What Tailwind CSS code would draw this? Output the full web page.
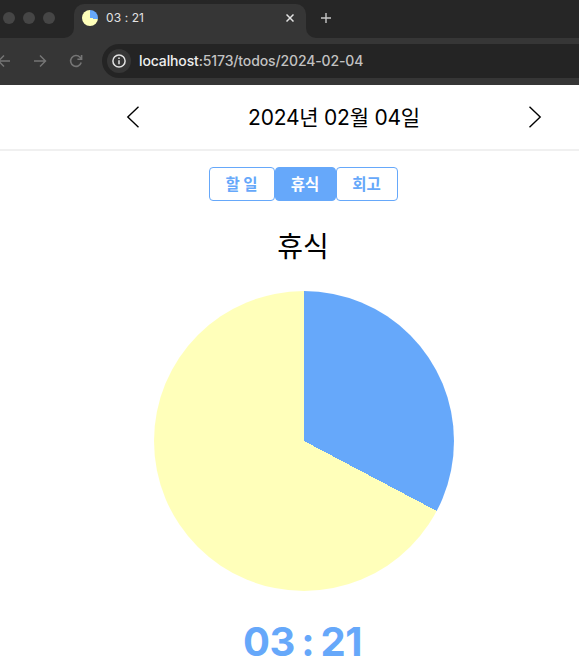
<!DOCTYPE html>
<html lang="ko">
<head>
  <meta charset="UTF-8" />
  <meta name="viewport" content="width=device-width, initial-scale=1.0" />
  <title>03 : 21</title>
  <script src="https://cdn.jsdelivr.net/npm/@tailwindcss/browser@4"></script>
</head>
<body class="h-screen overflow-hidden bg-white font-[Inter,'Noto_Sans_CJK_KR',sans-serif] text-black">

  <!-- Browser window -->
  <div class="h-[85px] bg-[#363636]">
    <!-- Tab strip -->
    <div class="flex h-[38px]">
      <div class="flex w-[74px] items-start gap-2 rounded-br-[10px] bg-[#262626] pt-3 pl-[3px]">
        <span class="size-3 rounded-full bg-[#464646]"></span>
        <span class="size-3 rounded-full bg-[#464646]"></span>
        <span class="size-3 rounded-full bg-[#464646]"></span>
      </div>
      <div class="w-[232px] bg-linear-to-b from-[#262626] from-50% to-[#363636] to-50% pt-1">
        <div class="flex h-[34px] items-start rounded-t-[10px] bg-[#363636] pt-1.5 pl-2">
          <span class="size-4 rounded-full bg-[conic-gradient(#66a8fa_100deg,#ffffba_100deg)]"></span>
          <span class="ml-2 text-xs leading-4 tracking-[0.1px] whitespace-pre text-[#e3e3e3]">03 : 21</span>
          <svg class="mt-1 mr-3 ml-auto size-2" viewBox="0 0 8 8" fill="none" stroke="#e3e3e3" stroke-width="1.5">
            <path d="M0.5 0.5 7.5 7.5M7.5 0.5 0.5 7.5" />
          </svg>
        </div>
      </div>
      <div class="flex-1 rounded-bl-[10px] bg-[#262626] pt-[13px] pl-[15px]">
        <svg class="size-[10px]" viewBox="0 0 10 10" fill="none" stroke="#c7c7c7" stroke-width="1.4">
          <path d="M5 0V10M0 5H10" />
        </svg>
      </div>
    </div>

    <!-- Toolbar -->
    <div class="flex h-[47px] items-center overflow-hidden pb-[1px]">
      <svg class="h-[14px] w-[11px] shrink-0" viewBox="3 0 11 14" fill="none" stroke="#757575" stroke-width="1.5">
        <path d="M13 7H2M7 1.5 1.5 7 7 12.5" />
      </svg>
      <svg class="ml-[22px] size-[14px] shrink-0" viewBox="0 0 14 14" fill="none" stroke="#757575" stroke-width="1.5">
        <path d="M1 7H12M7 1.5 12.5 7 7 12.5" />
      </svg>
      <svg class="ml-[22px] size-[14px] shrink-0" viewBox="0 0 14 14" fill="none" stroke="#757575" stroke-width="1.6">
        <path d="M12.2 8.5A5.4 5.4 0 1 1 11 3.3L12.7 5M12.6 1V5.2H8.4" />
      </svg>
      <div class="ml-[19px] flex h-[34px] flex-1 items-center rounded-l-full bg-[#242424] pl-[5px]">
        <span class="flex size-6 items-center justify-center rounded-full bg-[#363636]">
          <svg class="size-[14px]" viewBox="0 0 14 14" fill="none" stroke="#e3e3e3" stroke-width="1.5">
            <circle cx="7" cy="7" r="6.1" />
            <path d="M7 6.2V10.2M7 3.6V5.1" />
          </svg>
        </span>
        <p class="ml-2 text-[14px] leading-5 font-medium tracking-[-0.13px] whitespace-nowrap text-[#c2c2c2]"><span class="text-[#eeeeee]">localhost</span>:5173/todos/2024-02-04</p>
      </div>
    </div>
  </div>

  <!-- Date header -->
  <header class="flex h-[66px] items-center justify-between border-b-2 border-[#f0f0f0] pr-[37px] pl-[126px]">
    <svg class="h-[22px] w-[14px]" viewBox="0 0 14 22" fill="none" stroke="#000000" stroke-width="1.4">
      <path d="M12.5 0.8 1.8 11 12.5 21.2" />
    </svg>
    <h1 class="pt-0.5 text-[21px] leading-8 tracking-[-0.22px] whitespace-nowrap">2024년 02월 04일</h1>
    <svg class="h-[22px] w-[14px]" viewBox="0 0 14 22" fill="none" stroke="#000000" stroke-width="1.4">
      <path d="M1.5 0.8 12.2 11 1.5 21.2" />
    </svg>
  </header>

  <main class="flex flex-col items-center pt-4 pl-[29px]">
    <div class="mr-0.5 flex h-[34px] text-[15.5px] font-bold text-[#66a8fa]">
      <button class="w-[66px] rounded-[4px] border border-[#66a8fa] pt-0.5">할 일</button>
      <button class="w-[61px] rounded-[4px] border border-[#66a8fa] bg-[#66a8fa] pt-0.5 text-white">휴식</button>
      <button class="w-[62px] rounded-[4px] border border-[#66a8fa] pt-0.5">회고</button>
    </div>
    <h2 class="mt-[26px] mr-0.5 text-[28px] leading-10">휴식</h2>
    <div class="mt-6 size-[300px] rounded-full bg-[conic-gradient(#66a8fa_117.8deg,#ffffba_117.8deg)]"></div>
    <p class="mt-[27px] mr-[3px] text-[40px] leading-[48px] font-bold tracking-[-0.5px] whitespace-pre text-[#66a8fa] [word-spacing:-2.5px]">03 : 21</p>
  </main>

</body>
</html>
